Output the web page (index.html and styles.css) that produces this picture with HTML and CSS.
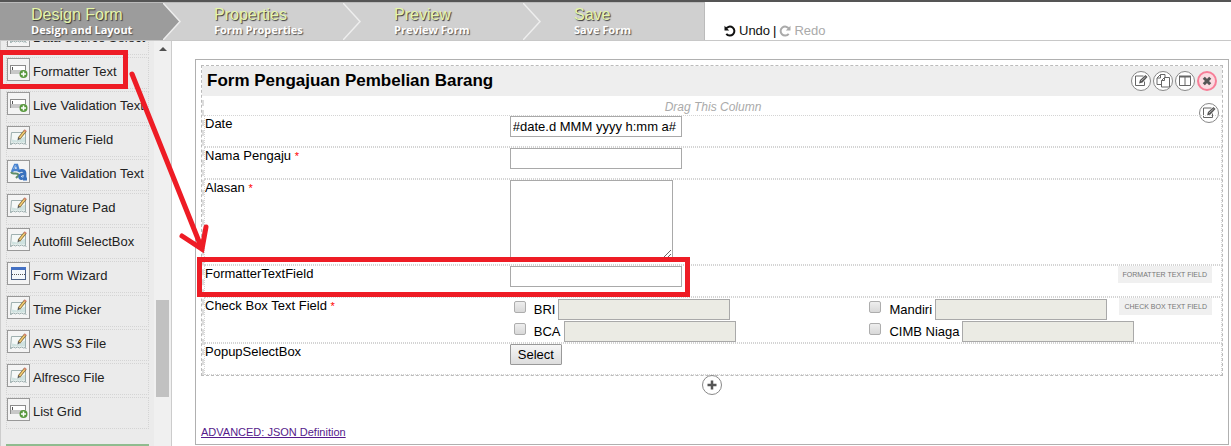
FILE: index.html
```html
<!DOCTYPE html>
<html lang="id">
<head>
<meta charset="utf-8">
<title>Design Form</title>
<link rel="stylesheet" href="styles.css">
</head>
<body>
<svg class="defs" aria-hidden="true">
  <symbol id="ic-grid" viewBox="0 0 21 21">
    <rect x="2.500" y="6.500" width="15" height="8" fill="#fff" stroke="#8b8b8b"/>
    <rect x="3" y="11" width="15" height="4" fill="#c8c8c8"/>
    <path d="M4.500 8v3" stroke="#555"/>
    <circle cx="15.500" cy="15" r="4" fill="#57983c"/>
    <path d="M15.500 12.500v5M13 15h5" stroke="#fff" stroke-width="1.500"/>
  </symbol>
  <symbol id="ic-pencil" viewBox="0 0 21 21">
    <path d="M3.500 5.500h14v11l-2 .5-2-1-2 1-2-1-2 1-2-1-3 1.500z" fill="#f4f8f7" stroke="#9fb0b0"/>
    <path d="M4 15.500v-3l5 1 8-4v6z" fill="#cfe2e0"/>
    <path d="M2.500 17.500l2-1M18.500 17.500l-2-1" stroke="#9fb0b0"/>
    <path d="M11 11.500l6.500-8" stroke="#84683a" stroke-width="3"/>
    <path d="M11.500 11l5.500-7" stroke="#f4cf72" stroke-width="1.500"/>
    <path d="M9.500 13.500l.5-3 2 1.500z" fill="#555"/>
    <path d="M16.500 4.500l1.200-1.500" stroke="#d98273" stroke-width="2"/>
  </symbol>
  <symbol id="ic-valid" viewBox="0 0 21 21">
    <path d="M4 11l3-7h2l2 7M5.500 9h5" fill="none" stroke="#4a83cf" stroke-width="2.500"/>
    <path d="M3 11c2 4 5-1 8 3l-3 3" fill="none" stroke="#5f8d6a" stroke-width="2"/>
    <path d="M11 10.500c3-2 6-1 6 2v6M17 13c-6-1-7 5-3 4.500l3-2M15 18h4" fill="none" stroke="#3971bd" stroke-width="2.800"/>
    <path d="M5.500 8l2-4M14 16.500l2-1" stroke="#8db9ec"/>
  </symbol>
  <symbol id="ic-wizard" viewBox="0 0 21 21">
    <rect x="3.500" y="4.500" width="14" height="12" fill="#f4f7fb" stroke="#4a5f86"/>
    <rect x="3" y="4" width="15" height="3" fill="#4471c4"/>
    <path d="M4 11.500h13" stroke="#555" stroke-dasharray="1 1"/>
  </symbol>
  <symbol id="ic-edit" viewBox="0 0 18 18">
    <path d="M12.500 9.500v4h-9v-9.500h8" fill="none" stroke="#666"/>
    <path d="M7 11.500l1-3.500 5.500-5 2 2-5 5.500z" fill="#555"/>
    <path d="M9 9l4.500-4" stroke="#ddd" stroke-width=".7"/>
  </symbol>
  <symbol id="ic-copy" viewBox="0 0 18 18">
    <path d="M7.500 12.500h-4.500v-6.500l3.500-3.500h4.500v3M6.500 2.500v3.500h-3.500M7.500 15v-6.500l3-3h5v9.500zM10.500 5.500v3h-3" fill="none" stroke="#666"/>
  </symbol>
  <symbol id="ic-columns" viewBox="0 0 18 18">
    <path d="M3.500 4.500h11v9h-11zM9 4.500v9" fill="none" stroke="#666"/>
    <path d="M3 4.500h12" stroke="#666" stroke-width="2"/>
  </symbol>
  <symbol id="ic-close" viewBox="0 0 16 16">
    <path d="M4.800 4.800l6.400 6.400M11.200 4.800l-6.400 6.400" stroke="#555" stroke-width="3"/>
  </symbol>
  <symbol id="ic-plus" viewBox="0 0 18 18">
    <path d="M9 4.500v9M4.500 9h9" stroke="#555" stroke-width="2.500"/>
  </symbol>
  <symbol id="ic-undo" viewBox="0 0 12 12">
    <path d="M2 3.800a4.500 4.500 0 1 1 .3 5" fill="none" stroke="currentColor" stroke-width="2"/>
    <path d="M.5.800v4.700h4.700z" fill="currentColor"/>
  </symbol>
</svg>

<header class="topbar">
  <nav class="steps">
    <a class="step step-active" href="#design"><span class="step-title">Design Form</span><span class="step-sub">Design and Layout</span>
      <svg class="step-arrow" viewBox="0 0 18 37" aria-hidden="true"><path d="M0 0l17 18.500-17 18.500h18v-37z" fill="#d0d0d0"/><path d="M0 0l17 18.500-17 18.500" fill="none" stroke="#eee" stroke-width="1.500"/></svg></a>
    <a class="step" href="#properties"><span class="step-title">Properties</span><span class="step-sub">Form Properties</span>
      <svg class="step-arrow" viewBox="0 0 18 37" aria-hidden="true"><path d="M0 0l17 18.500-17 18.500" fill="none" stroke="#eee" stroke-width="1.500"/></svg></a>
    <a class="step" href="#preview"><span class="step-title">Preview</span><span class="step-sub">Preview Form</span>
      <svg class="step-arrow" viewBox="0 0 18 37" aria-hidden="true"><path d="M0 0l17 18.500-17 18.500" fill="none" stroke="#eee" stroke-width="1.500"/></svg></a>
    <a class="step step-last" href="#save"><span class="step-title">Save</span><span class="step-sub">Save Form</span></a>
  </nav>
  <div class="history">
    <button class="history-btn" type="button"><svg class="history-icon" aria-hidden="true"><use href="#ic-undo"/></svg>Undo</button>
    <span>|</span>
    <button class="history-btn" type="button" disabled><svg class="history-icon flip" aria-hidden="true"><use href="#ic-undo"/></svg>Redo</button>
  </div>
</header>

<div class="workspace">
  <aside class="sidebar">
    <div class="palette">
      <ul class="palette-list">
        <li class="tool"><svg class="tool-icon"><use href="#ic-pencil"/></svg>Data Source Select</li>
        <li class="tool"><svg class="tool-icon"><use href="#ic-grid"/></svg>Formatter Text</li>
        <li class="tool"><svg class="tool-icon"><use href="#ic-grid"/></svg>Live Validation Text</li>
        <li class="tool"><svg class="tool-icon"><use href="#ic-pencil"/></svg>Numeric Field</li>
        <li class="tool"><svg class="tool-icon"><use href="#ic-valid"/></svg>Live Validation Text</li>
        <li class="tool"><svg class="tool-icon"><use href="#ic-pencil"/></svg>Signature Pad</li>
        <li class="tool"><svg class="tool-icon"><use href="#ic-pencil"/></svg>Autofill SelectBox</li>
        <li class="tool"><svg class="tool-icon"><use href="#ic-wizard"/></svg>Form Wizard</li>
        <li class="tool"><svg class="tool-icon"><use href="#ic-pencil"/></svg>Time Picker</li>
        <li class="tool"><svg class="tool-icon"><use href="#ic-pencil"/></svg>AWS S3 File</li>
        <li class="tool"><svg class="tool-icon"><use href="#ic-pencil"/></svg>Alfresco File</li>
        <li class="tool"><svg class="tool-icon"><use href="#ic-grid"/></svg>List Grid</li>
      </ul>
      <div class="palette-next"></div>
    </div>
    <div class="scrollbar"><span class="scroll-up"></span><span class="scroll-thumb"></span></div>
  </aside>

  <main class="canvas">
    <div class="form-card">
      <section class="section">
        <div class="section-head">
          <h1 class="section-title">Form Pengajuan Pembelian Barang</h1>
          <div class="actions">
            <button class="round" type="button" aria-label="Edit section"><svg><use href="#ic-edit"/></svg></button>
            <button class="round" type="button" aria-label="Copy section"><svg><use href="#ic-copy"/></svg></button>
            <button class="round" type="button" aria-label="Columns"><svg><use href="#ic-columns"/></svg></button>
            <button class="round round-danger" type="button" aria-label="Delete section"><svg><use href="#ic-close"/></svg></button>
          </div>
        </div>
        <div class="column">
          <div class="column-head">Drag This Column</div>
          <button class="round column-edit" type="button" aria-label="Edit column"><svg><use href="#ic-edit"/></svg></button>
          <div class="row">
            <label class="label" for="f-date">Date</label>
            <div class="field"><input class="text" id="f-date" type="text" value="#date.d MMM yyyy h:mm a#"></div>
          </div>
          <div class="row">
            <label class="label" for="f-nama">Nama Pengaju <span class="req">*</span></label>
            <div class="field"><input class="text" id="f-nama" type="text"></div>
          </div>
          <div class="row row-area">
            <label class="label" for="f-alasan">Alasan <span class="req">*</span></label>
            <div class="field"><textarea class="area" id="f-alasan"></textarea></div>
          </div>
          <div class="row">
            <label class="label" for="f-fmt">FormatterTextField</label>
            <div class="field"><input class="text" id="f-fmt" type="text"></div>
            <span class="badge">FORMATTER TEXT FIELD</span>
          </div>
          <div class="row row-checks">
            <span class="label">Check Box Text Field <span class="req">*</span></span>
            <div class="field options">
              <div class="option"><input class="check" type="checkbox" id="c-bri"><label for="c-bri">BRI</label><input class="text text-off" type="text" aria-label="BRI" disabled></div>
              <div class="option"><input class="check" type="checkbox" id="c-man"><label for="c-man">Mandiri</label><input class="text text-off" type="text" aria-label="Mandiri" disabled></div>
              <div class="option"><input class="check" type="checkbox" id="c-bca"><label for="c-bca">BCA</label><input class="text text-off" type="text" aria-label="BCA" disabled></div>
              <div class="option"><input class="check" type="checkbox" id="c-cimb"><label for="c-cimb">CIMB Niaga</label><input class="text text-off" type="text" aria-label="CIMB Niaga" disabled></div>
            </div>
            <span class="badge">CHECK BOX TEXT FIELD</span>
          </div>
          <div class="row">
            <span class="label">PopupSelectBox</span>
            <div class="field"><button class="select-btn" type="button">Select</button></div>
          </div>
        </div>
      </section>
      <div class="add-bar"><button class="round" type="button" aria-label="Add section"><svg><use href="#ic-plus"/></svg></button></div>
      <a class="advanced" href="#json">ADVANCED: JSON Definition</a>
    </div>
  </main>
</div>

<svg class="callout" aria-hidden="true">
  <rect x="0.500" y="52.500" width="125" height="34"/>
  <rect x="199.500" y="259.500" width="488" height="35"/>
  <path d="M132 74L202 249M182 236l20 13 4-22" stroke-linecap="round"/>
</svg>
</body>
</html>
```

FILE: styles.css
```css
* { box-sizing: border-box; }

body {
  margin: 0;
  height: 100vh;
  overflow: hidden;
  display: flex;
  flex-direction: column;
  background: #fff;
  color: #000;
  font: 13px/15px "Liberation Sans", Arial, sans-serif;
}

button, input, textarea { font: inherit; margin: 0; }

.defs { position: absolute; width: 0; height: 0; }

/* Top bar */
.topbar {
  display: flex;
  flex: none;
  height: 41px;
  border-top: 2px solid #555;
  border-bottom: 1px solid #c8c8c8;
}

.steps {
  display: flex;
  border-top: 1px solid #bbb;
  border-right: 1px solid #bbb;
  background: #d0d0d0;
}

.step {
  position: relative;
  display: flex;
  flex-direction: column;
  width: 180px;
  padding: 3px 0 0 34px;
  color: #fff;
  text-decoration: none;
}

.step:first-child { padding-left: 31px; }
.step-active { background: #9c9c9c; }
.step-last { width: 164px; }

.step-title {
  color: #e6f5a9;
  font-size: 16px;
  line-height: 18px;
  text-shadow: 1px 1px 1px #333;
}

.step-sub {
  font: bold 11px/12px "Open Sans", "Noto Sans", sans-serif;
  text-shadow: 1px 1px 1px #555;
}

.step-arrow { position: absolute; top: 0; right: -1px; width: 18px; height: 37px; }

.history {
  display: flex;
  align-items: flex-end;
  gap: 3px;
  padding: 0 0 2px 19px;
}

.history-btn {
  display: flex;
  align-items: center;
  gap: 3px;
  padding: 0;
  border: 0;
  background: none;
  color: #111;
}

.history-btn:disabled { color: #aaa; }
.history-icon { width: 12px; height: 12px; }
.flip { transform: scaleX(-1); }

/* Palette */
.workspace { display: flex; flex: 1; min-height: 0; }

.sidebar {
  display: flex;
  flex: none;
  width: 172px;
  overflow: hidden;
  background: #ebebeb;
  border-left: 1px solid #ccc;
  border-right: 1px solid #ccc;
}

.palette { flex: 1; padding: 0 5px; }

.palette-list {
  display: flex;
  flex-direction: column;
  gap: 2px;
  margin: -18px 0 0;
  padding: 0;
  list-style: none;
}

.tool {
  display: flex;
  align-items: flex-start;
  gap: 3px;
  height: 32px;
  border: 1px dotted #d4d4d4;
  line-height: 28px;
  white-space: nowrap;
  color: #222;
}

.tool-icon {
  flex: none;
  width: 23px;
  height: 23px;
  border: 1px solid #999;
  background: #f4f4f4;
}

.palette-next { height: 20px; margin-top: 15px; background: #8fbc8f; }

.scrollbar {
  display: flex;
  flex-direction: column;
  align-items: center;
  width: 17px;
  padding-top: 6px;
  background: #f0f0f0;
}

.scroll-up {
  border: 4px solid transparent;
  border-top: 0;
  border-bottom: 4px solid #505050;
}

.scroll-thumb { width: 13px; height: 97px; margin-top: 249px; background: #c1c1c1; }

/* Form canvas */
.canvas { flex: 1; min-width: 0; padding: 18px 2px 0 23px; }

.form-card {
  height: 386px;
  padding: 5px;
  border: 1px solid #b0b0b0;
}

.section { border: 1px dashed #bbb; }

.section-head {
  display: flex;
  align-items: center;
  justify-content: space-between;
  height: 30px;
  padding: 0 5px;
  background: #eee;
}

.section-title { margin: 0; font-size: 17px; line-height: 20px; }

.actions { display: flex; gap: 2px; }

.round {
  width: 20px;
  height: 20px;
  padding: 0;
  border: 1px solid #888;
  border-radius: 50%;
  background: #fff;
}

.round svg { display: block; width: 18px; height: 18px; }
.round-danger { border: 2px solid #f77f98; background: #fbdbe1; }
.round-danger svg { width: 16px; height: 16px; }

.column {
  position: relative;
  margin-top: 4px;
  border-left: 2px dashed #ddd;
}

.column-head {
  height: 15px;
  color: #aaa;
  font-size: 12px;
  font-style: italic;
  text-align: center;
}

.column-edit { position: absolute; top: 3px; right: 3px; }

.row {
  position: relative;
  display: flex;
  height: 32px;
  border: 1px dotted #d4d4d4;
}

.row-area { height: 86px; }
.row-checks { height: 46px; }

.label { flex: 0 0 30%; }
.req { color: #f00; font-size: 11px; }
.field { flex: 1; min-width: 0; }

.text {
  display: block;
  width: 172px;
  height: 21px;
  padding: 0 2px;
  border: 1px solid #a9a9a9;
  background: #fff;
}

.text-off { background: #ebebe4; }

.area {
  display: block;
  width: 163px;
  height: 79px;
  border: 1px solid #a9a9a9;
}

.options {
  display: grid;
  grid-template-columns: 1fr 1fr;
  align-content: start;
  gap: 1px 0;
  padding-top: 1px;
}

.option { display: flex; }
.option label { margin: 3px 3px 0 8px; }

.check {
  appearance: none;
  width: 12px;
  height: 12px;
  margin: 2px 0 0 4px;
  border: 1px solid #adadad;
  border-radius: 2px;
  background: linear-gradient(#eee, #d8d8d8);
}

.select-btn {
  display: block;
  height: 21px;
  padding: 0 7px;
  border: 1px solid #999;
  border-radius: 1px;
  background: linear-gradient(#f6f6f6, #ddd);
}

.badge {
  position: absolute;
  top: 0;
  right: 9px;
  padding: 0 5px;
  background: #f0f0f0;
  color: #777;
  font-size: 7px;
  line-height: 17px;
}

.add-bar { display: flex; justify-content: center; height: 49px; margin-top: -1px; }

.advanced { color: #551a8b; font-size: 11px; line-height: 13px; }

/* Highlight drawn over the page */
.callout {
  position: absolute;
  top: 0;
  left: 0;
  width: 100%;
  height: 100%;
  pointer-events: none;
  fill: none;
  stroke: #ee1c25;
  stroke-width: 5;
}
```
